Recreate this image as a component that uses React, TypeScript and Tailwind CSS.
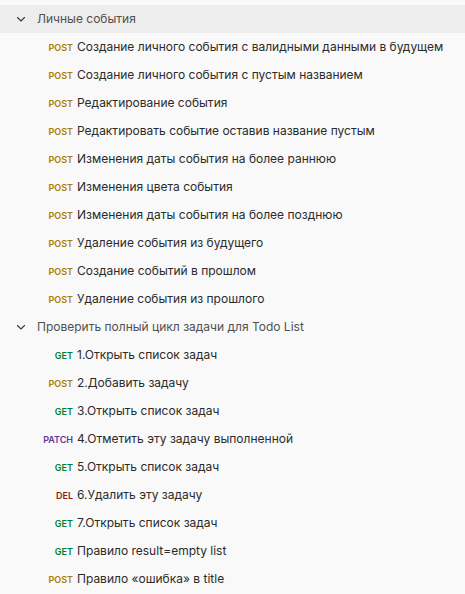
import React from "react";

type Item = { m: "POST" | "GET" | "PATCH" | "DEL"; t: string };

const colors: Record<string, string> = {
  POST: "text-[#ad7a03]",
  GET: "text-[#007f31]",
  PATCH: "text-[#623497]",
  DEL: "text-[#8e1a10]",
};

const groups: { title: string; active?: boolean; items: Item[] }[] = [
  {
    title: "Личные события",
    active: true,
    items: [
      { m: "POST", t: "Создание личного события с валидными данными в будущем" },
      { m: "POST", t: "Создание личного события с пустым названием" },
      { m: "POST", t: "Редактирование события" },
      { m: "POST", t: "Редактировать событие оставив название пустым" },
      { m: "POST", t: "Изменения даты события на более раннюю" },
      { m: "POST", t: "Изменения цвета события" },
      { m: "POST", t: "Изменения даты события на более позднюю" },
      { m: "POST", t: "Удаление события из будущего" },
      { m: "POST", t: "Создание событий в прошлом" },
      { m: "POST", t: "Удаление события из прошлого" },
    ],
  },
  {
    title: "Проверить полный цикл задачи для Todo List",
    items: [
      { m: "GET", t: "1.Открыть список задач" },
      { m: "POST", t: "2.Добавить задачу" },
      { m: "GET", t: "3.Открыть список задач" },
      { m: "PATCH", t: "4.Отметить эту задачу выполненной" },
      { m: "GET", t: "5.Открыть список задач" },
      { m: "DEL", t: "6.Удалить эту задачу" },
      { m: "GET", t: "7.Открыть список задач" },
      { m: "GET", t: "Правило result=empty list" },
      { m: "POST", t: "Правило «ошибка» в title" },
    ],
  },
];

function Chevron() {
  return (
    <svg width="12" height="12" viewBox="0 0 12 12" fill="none">
      <path d="M2.5 4.5 L6 8 L9.5 4.5" stroke="#3b3b3b" strokeWidth="1.1" strokeLinecap="round" strokeLinejoin="round" />
    </svg>
  );
}

export default function App() {
  return (
    <div
      className="w-[465px] h-[594px] bg-[#f9f9f9] pt-[5px] overflow-hidden text-[12px] text-[#212121]"
      style={{ fontFamily: "Inter, 'Noto Sans', sans-serif" }}
    >
      {groups.map((g) => (
        <div key={g.title}>
          <div className={`h-[28px] flex items-center pl-[15px] ${g.active ? "bg-[#ededed]" : ""}`}>
            <Chevron />
            <span className="ml-[10px] text-[#505050] whitespace-nowrap">{g.title}</span>
          </div>
          {g.items.map((it, i) => (
            <div key={i} className="h-[28px] flex items-center">
              <div className="w-[73px] shrink-0 flex justify-end">
                <span className={`text-[9px] font-semibold leading-none ${colors[it.m]}`}>{it.m}</span>
              </div>
              <span className="ml-[4px] whitespace-nowrap text-[#2b2b2b]">{it.t}</span>
            </div>
          ))}
        </div>
      ))}
    </div>
  );
}
